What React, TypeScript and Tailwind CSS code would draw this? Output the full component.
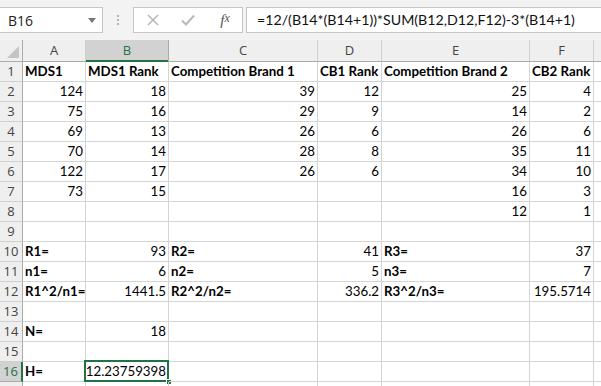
const cols = ["A", "B", "C", "D", "E", "F"];
const widths = ["w-[23px]", "w-[63px]", "w-[83px]", "w-[149px]", "w-[64px]", "w-[148px]", "w-[64px]"];

type Cell = { v: string; b?: boolean; r?: boolean };

const L = (v: string): Cell => ({ v, b: true });
const N = (v: string): Cell => ({ v, r: true });
const E: Cell = { v: "" };

const rows: Cell[][] = [
  [L("MDS1"), L("MDS1 Rank"), L("Competition Brand 1"), L("CB1 Rank"), L("Competition Brand 2"), L("CB2 Rank")],
  [N("124"), N("18"), N("39"), N("12"), N("25"), N("4")],
  [N("75"), N("16"), N("29"), N("9"), N("14"), N("2")],
  [N("69"), N("13"), N("26"), N("6"), N("26"), N("6")],
  [N("70"), N("14"), N("28"), N("8"), N("35"), N("11")],
  [N("122"), N("17"), N("26"), N("6"), N("34"), N("10")],
  [N("73"), N("15"), E, E, N("16"), N("3")],
  [E, E, E, E, N("12"), N("1")],
  [E, E, E, E, E, E],
  [L("R1="), N("93"), L("R2="), N("41"), L("R3="), N("37")],
  [L("n1="), N("6"), L("n2="), N("5"), L("n3="), N("7")],
  [L("R1^2/n1="), N("1441.5"), L("R2^2/n2="), N("336.2"), L("R3^2/n3="), N("195.5714")],
  [E, E, E, E, E, E],
  [L("N="), N("18"), E, E, E, E],
  [E, E, E, E, E, E],
  [L("H="), N("12.23759398"), E, E, E, E],
  [E, E, E, E, E, E],
];

function FormulaBar() {
  return (
    <div className="h-[40px] bg-[#f3f3f3] flex items-start pt-[7px] font-['Open_Sans',sans-serif]">
      <div className="w-[103px] h-[26px] bg-white border border-[#c6c6c6] border-l-0 flex items-center justify-between pl-[8px] pr-[6px] text-[14px] text-[#222]">
        <span>B16</span>
        <svg width="8" height="5" viewBox="0 0 8 5"><path d="M0 0h8L4 5z" fill="#777" /></svg>
      </div>
      <div className="w-[30px] h-[26px] flex flex-col items-center justify-center gap-[2px]">
        <span className="w-[2px] h-[2px] bg-[#b4b4b4]" />
        <span className="w-[2px] h-[2px] bg-[#b4b4b4]" />
        <span className="w-[2px] h-[2px] bg-[#b4b4b4]" />
      </div>
      <div className="w-[110px] h-[26px] bg-white border border-[#c6c6c6] flex items-center">
        <div className="w-[38px] flex justify-center">
          <svg width="12" height="12" viewBox="0 0 12 12"><path d="M1 1l10 10M11 1L1 11" stroke="#b8b8b8" strokeWidth="1.6" /></svg>
        </div>
        <div className="w-[32px] flex justify-center">
          <svg width="14" height="12" viewBox="0 0 14 12"><path d="M1 6.5l4 4L13 1.5" stroke="#b8b8b8" strokeWidth="2" fill="none" /></svg>
        </div>
        <div className="flex-1 flex justify-center pl-[4px] font-['Liberation_Serif',serif] italic text-[15px] text-[#555]">
          f<span className="text-[12px]">x</span>
        </div>
      </div>
      <div className="flex-1 h-[26px] ml-[3px] bg-white border border-[#c6c6c6] border-r-0 flex items-center pl-[10px] text-[14.2px] text-[#111] font-['Lato',sans-serif] whitespace-nowrap overflow-hidden">
        =12/(B14*(B14+1))*SUM(B12,D12,F12)-3*(B14+1)
      </div>
    </div>
  );
}

function HeaderRow() {
  return (
    <div className="flex h-[22px] bg-[#efefef] border-b border-[#ababab] text-[13px] text-[#444] font-['Open_Sans',sans-serif]">
      <div className={`${widths[0]} shrink-0 border-r border-[#ababab] relative`}>
        <svg className="absolute right-[3px] bottom-[3px]" width="12" height="12" viewBox="0 0 12 12"><path d="M12 0V12H0z" fill="#c4c4c4" /></svg>
      </div>
      {cols.map((c, i) =>
        c === "B" ? (
          <div key={c} className={`${widths[i + 1]} shrink-0 bg-[#d2d2d2] border-r border-[#ababab] text-[#217346] flex items-center justify-center relative`}>
            {c}
            <span className="absolute left-0 right-0 bottom-[-1px] h-[2px] bg-[#217346]" />
          </div>
        ) : (
          <div key={c} className={`${widths[i + 1]} shrink-0 border-r border-[#d0d0d0] flex items-center justify-center`}>
            {c}
          </div>
        )
      )}
      <div className="flex-1" />
    </div>
  );
}

export default function App() {
  return (
    <div className="w-[601px] h-[386px] overflow-hidden bg-white">
      <FormulaBar />
      <HeaderRow />
      {rows.map((row, ri) => {
        const n = ri + 1;
        const sel = n === 16;
        // row 17 only shows a few pixels at the bottom edge
        const label = n <= 16 ? n : "";
        return (
          <div key={n} className="flex h-[20px]">
            <div
              className={`${widths[0]} shrink-0 border-b flex items-center justify-center text-[13px] font-['Open_Sans',sans-serif] ${
                sel
                  ? "bg-[#d2d2d2] text-[#217346] border-r-2 border-r-[#217346] border-b-[#ababab]"
                  : "bg-[#efefef] text-[#444] border-r border-r-[#ababab] border-b-[#d0d0d0]"
              }`}
            >
              {label}
            </div>
            {row.map((c, ci) => {
              const active = sel && ci === 1;
              return (
                <div
                  key={ci}
                  className={`${widths[ci + 1]} shrink-0 border-r border-b border-[#d4d4d4] px-[2px] flex items-center whitespace-nowrap text-[13.3px] text-black font-['Lato',sans-serif] relative ${
                    c.r ? "justify-end" : "justify-start"
                  } ${c.b ? "font-bold" : ""}`}
                >
                  {c.v}
                  {active && (
                    <>
                      <span className="absolute left-[-2px] top-[-2px] right-[-1px] bottom-[-1px] border-2 border-[#217346]" />
                      <span className="absolute right-[-4px] bottom-[-4px] w-[6px] h-[6px] bg-[#217346] border border-white" />
                    </>
                  )}
                </div>
              );
            })}
            <div className="flex-1 border-b border-[#d4d4d4]" />
          </div>
        );
      })}
    </div>
  );
}
